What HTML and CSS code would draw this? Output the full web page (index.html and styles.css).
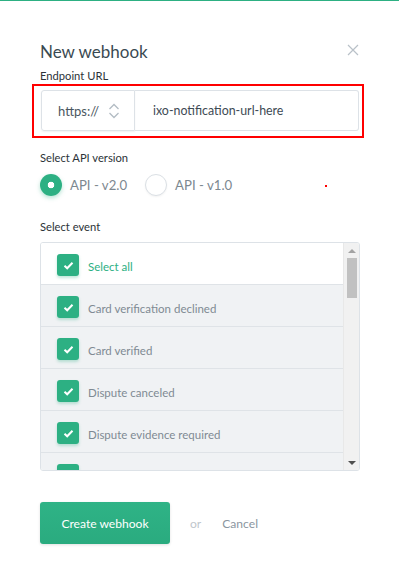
FILE: index.html
```html
<!doctype html>
<html lang="en">
<head>
  <meta charset="utf-8" />
  <meta name="viewport" content="width=device-width,initial-scale=1" />
  <title>New webhook</title>
  <link rel="stylesheet" href="styles.css">
</head>
<body>
<div class="topbar"></div>

<div class="modal">
  <div class="head">
    <h1>New webhook</h1>
    <svg class="close" width="12" height="12" viewBox="0 0 12 12"><path d="M1 1L11 11M11 1L1 11" stroke="#b9c1c8" stroke-width="1.2"/></svg>
  </div>

  <label class="lbl">Endpoint URL</label>
  <div class="mark">
    <div class="url">
      <div class="scheme">
        <span>https://</span>
        <svg width="12" height="16" viewBox="0 0 12 16"><path d="M1.5 6L6 1.5L10.5 6M1.5 10L6 14.5L10.5 10" fill="none" stroke="#b3bcc4" stroke-width="1.3"/></svg>
      </div>
      <div class="host">ixo-notification-url-here</div>
    </div>
  </div>

  <label class="lbl ver">Select API version</label>
  <div class="radios">
    <div class="radio on"><span class="dot"></span>API - v2.0</div>
    <div class="radio"><span class="dot"></span>API - v1.0</div>
    <span class="redpx"></span>
  </div>

  <label class="lbl ev">Select event</label>
  <div class="list">
    <div class="rows">
      <div class="row all"><span class="check"></span>Select all</div>
      <div class="row"><span class="check"></span>Card verification declined</div>
      <div class="row"><span class="check"></span>Card verified</div>
      <div class="row"><span class="check"></span>Dispute canceled</div>
      <div class="row"><span class="check"></span>Dispute evidence required</div>
      <div class="row"><span class="check"></span></div>
    </div>
    <div class="bar">
      <span class="up"></span>
      <span class="thumb"></span>
      <span class="down"></span>
    </div>
  </div>

  <div class="actions">
    <button class="btn">Create webhook</button>
    <span class="or">or</span>
    <span class="cancel">Cancel</span>
  </div>
</div>
</body>
</html>
```

FILE: styles.css
```css
:root{
  --green:#2db083;
  --line:#dde2e7;
  --muted:#7f8a93;
}

*{box-sizing:border-box;margin:0;padding:0}

body{
  font-family:Lato,'Noto Sans',sans-serif;
  color:#37424c;
  background:#fff;
  width:399px;
  height:580px;
  overflow:hidden;
}

.topbar{height:1px;background:var(--green)}

.modal{
  padding:38px 39px 0 40px;
  display:flex;
  flex-direction:column;
}

.head{
  display:flex;
  justify-content:space-between;
  align-items:flex-start;
}

h1{
  font-size:17px;
  font-weight:400;
  color:#3a4a52;
  line-height:26px;
}

.close{margin-top:5px;margin-right:1px}

.lbl{
  font-size:11.2px;
  color:#2c3338;
  line-height:16px;
  margin-top:3px;
}

.mark{
  margin:0 -4px 0 -8px;
  border:2px solid #f00;
  padding:4px 3px 5px 7px;
}

.url{
  display:flex;
  height:41px;
}

.scheme{
  width:94px;
  display:flex;
  align-items:center;
  justify-content:space-between;
  padding:0 14px 0 16px;
  border:1px solid var(--line);
  border-radius:3px 0 0 3px;
  box-shadow:0 1px 2px rgba(0,0,0,0.06);
  font-size:13px;
  color:#4a5660;
}

.host{
  flex:1;
  display:flex;
  align-items:center;
  padding-left:18px;
  border:1px solid var(--line);
  border-left:none;
  border-radius:0 3px 3px 0;
  font-size:12.4px;
  color:#3e4a54;
}

.ver{margin-top:12px}

.radios{
  display:flex;
  align-items:center;
  gap:18px;
  margin-top:8px;
  position:relative;
}

.radio{
  display:flex;
  align-items:center;
  gap:8px;
  font-size:13.2px;
  color:#7d8890;
}

.dot{
  width:22px;height:22px;
  border-radius:50%;
  border:1px solid #dbe0e5;
  background:#fff;
  box-shadow:0 1px 2px rgba(0,0,0,0.05);
}

.radio.on .dot{
  border:none;
  background:radial-gradient(circle,#fff 0 3px,var(--green) 3.6px);
  box-shadow:0 2px 4px rgba(45,176,131,0.35);
}

.redpx{
  position:absolute;
  left:285px;top:11px;
  width:2px;height:2px;
  background:#f00;
}

.ev{margin-top:23px}

.list{
  margin-top:7px;
  height:229px;
  border:1px solid var(--line);
  border-radius:3px;
  display:flex;
  overflow:hidden;
}

.rows{flex:1;overflow:hidden}

.row{
  height:42px;
  display:flex;
  align-items:center;
  gap:9px;
  padding:5px 0 0 16px;
  background:#f0f2f4;
  border-bottom:1px solid #dfe3e7;
  font-size:11.5px;
  color:var(--muted);
}

.row.all{
  background:#fff;
  color:var(--green);
}

.check{
  width:22px;height:22px;
  flex:none;
  margin-top:-2px;
  border-radius:3px;
  background:var(--green) no-repeat center/11px 9px;
  background-image:url("data:image/svg+xml,%3Csvg xmlns='http://www.w3.org/2000/svg' viewBox='0 0 11 9'%3E%3Cpath d='M1.5 4.8L4.2 7.3L9.5 1.8' fill='none' stroke='white' stroke-width='2'/%3E%3C/svg%3E");
  box-shadow:0 2px 3px rgba(45,176,131,0.3);
}

.bar{
  width:16px;
  background:#f1f1f1;
  border-left:1px solid #e8e8e8;
  display:flex;
  flex-direction:column;
  align-items:center;
  position:relative;
}

.up,.down{
  width:0;height:0;
  border-left:4px solid transparent;
  border-right:4px solid transparent;
}
.up{border-bottom:4px solid #a3a3a3;margin-top:6px}
.down{border-top:4px solid #505050;position:absolute;bottom:5px}

.thumb{
  width:10px;
  height:40px;
  background:#c1c1c1;
  margin-top:5px;
}

.actions{
  display:flex;
  align-items:center;
  margin-top:31px;
  font-size:12.1px;
}

.btn{
  width:130px;height:42px;
  border:none;border-radius:3px;
  background:linear-gradient(#2fb386,#2aab7f);
  color:#fff;
  font-family:inherit;
  font-size:12.1px;
  box-shadow:0 1px 3px rgba(0,0,0,0.12);
}

.or{color:#bfc6cc;margin-left:20px}
.cancel{color:#8b969f;margin-left:21px}
```
